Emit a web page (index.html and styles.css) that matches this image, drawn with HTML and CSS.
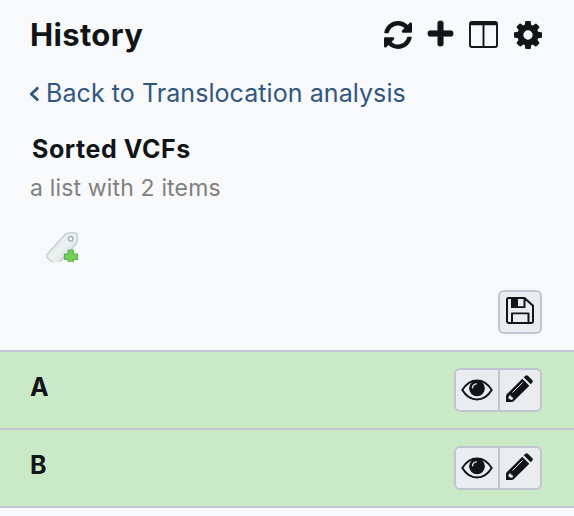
FILE: index.html
```html
<!DOCTYPE html>
<html lang="en">
<head>
<meta charset="utf-8">
<title>History</title>
<link rel="stylesheet" href="styles.css">
</head>
<body>
<svg class="defs" aria-hidden="true">
  <symbol id="eye" viewBox="0 0 32 22">
    <path d="M1.300 11C5 5 10 1.500 16 1.500S27 5 30.700 11C27 17 22 20.500 16 20.500S5 17 1.300 11Z" fill="none" stroke="currentColor" stroke-width="2"/>
    <circle cx="16" cy="9.300" r="7.900" fill="currentColor"/>
    <path d="M11.500 8.800Q11.800 5.300 15.300 4.800" fill="none" stroke="#ebecf0" stroke-width="1.300" stroke-linecap="round"/>
  </symbol>
  <symbol id="pencil" viewBox="0 0 27 27">
    <path fill="currentColor" d="M16.300 3.700 23.300 10.700 7.700 26.300Q7 27 6 27H0V21Q0 20 .7 19.300ZM17.700 2.300 19.400.7Q20.600-.4 21.900.8L26.200 5.100Q27.400 6.400 26.300 7.600L24.700 9.300Z"/>
    <path d="M6.500 17.500 16.700 7.300" stroke="#ebecf0" stroke-width="1" fill="none"/>
    <path d="M3.200 20.400 5.200 20.800 5.600 22.200 7 22.600 7.100 24 5.300 25 2.200 23.300Z" fill="#ebecf0"/>
  </symbol>
</svg>
<main class="panel">
  <header class="top">
    <h1>History</h1>
    <nav class="tools">
      <svg class="refresh" viewBox="8 8 496 496"><path fill="currentColor" d="M370.720 133.280C339.458 104.008 298.888 87.962 255.848 88c-77.458.068-144.328 53.178-162.791 126.850-1.344 5.363-6.122 9.150-11.651 9.150H24.103c-7.498 0-13.194-6.807-11.807-14.176C33.933 94.924 134.813 8 256 8c66.448 0 126.791 26.136 171.315 68.685L463.030 40.970C478.149 25.851 504 36.559 504 57.941V192c0 13.255-10.745 24-24 24H345.941c-21.382 0-32.090-25.851-16.971-40.971l41.750-41.749zM32 296h134.059c21.382 0 32.090 25.851 16.971 40.971l-41.750 41.750c31.262 29.273 71.835 45.319 114.876 45.280 77.418-.070 144.315-53.144 162.787-126.849 1.344-5.363 6.122-9.150 11.651-9.150h57.304c7.498 0 13.194 6.807 11.807 14.176C478.067 417.076 377.187 504 256 504c-66.448 0-126.791-26.136-171.315-68.685L48.970 471.030C33.851 486.149 8 475.441 8 454.059V320c0-13.255 10.745-24 24-24z"/></svg>
      <svg class="plus" viewBox="0 32 448 448"><path fill="currentColor" stroke="currentColor" stroke-width="12" d="M416 208H272V64c0-17.670-14.330-32-32-32h-32c-17.670 0-32 14.330-32 32v144H32c-17.670 0-32 14.330-32 32v32c0 17.670 14.330 32 32 32h144v144c0 17.670 14.330 32 32 32h32c17.670 0 32-14.330 32-32V304h144c17.670 0 32-14.330 32-32v-32c0-17.670-14.330-32-32-32z"/></svg>
      <svg class="columns" viewBox="0 0 30 28"><path fill="currentColor" fill-rule="evenodd" d="M3 0H27Q30 0 30 3V25Q30 28 27 28H3Q0 28 0 25V3Q0 0 3 0ZM2 4.500V25Q2 26 3 26H14V4.500ZM16 4.500V26H27Q28 26 28 25V4.500Z"/></svg>
      <svg class="gear" viewBox="0 -128 1536 1536"><path fill="currentColor" d="M1024 640q0-106-75-181t-181-75-181 75-75 181 75 181 181 75 181-75 75-181zm512-109v222q0 12-8 23t-20 13l-185 28q-19 54-39 91 35 50 107 138 10 12 10 25t-9 23q-27 37-99 108t-94 71q-12 0-26-9l-138-108q-44 23-91 38-16 136-29 186-7 28-36 28H657q-14 0-24.500-8.500T621 1378l-28-184q-49-16-90-37l-141 107q-10 9-25 9-14 0-25-11-126-114-165-168-7-10-7-23 0-12 8-23 15-21 51-66.500t54-70.500q-27-50-41-99L29 783q-13-2-21-12.500T0 747V525q0-12 8-23t19-13l186-28q14-46 39-92-40-57-107-138-10-12-10-24 0-10 9-23 26-36 98.500-107.500T337 5q13 0 26 10l138 107q44-23 91-38 16-136 29-186 7-28 36-28h222q14 0 24.500 8.500T915-98l28 184q49 16 90 37l142-107q9-9 24-9 13 0 25 10 129 119 165 170 7 8 7 22 0 12-8 23-15 21-51 66.500T1283 369q26 50 41 98l183 28q13 2 21 12.500t8 23.500z"/></svg>
    </nav>
  </header>
  <a class="back"><svg viewBox="0 0 11 16"><path d="M8.500 2.500 2 8.500 8.500 14.500" fill="none" stroke="currentColor" stroke-width="3" stroke-linecap="round" stroke-linejoin="round"/></svg><span>Back to Translocation analysis</span></a>
  <h2>Sorted VCFs</h2>
  <p class="summary">a list with 2 items</p>
  <svg class="tag" viewBox="0 0 32 30">
    <defs><linearGradient id="paper" x1="0" y1="0" x2="1" y2="1"><stop offset="0" stop-color="#d3dddc"/><stop offset=".5" stop-color="#edf2f2"/><stop offset="1" stop-color="#c3d0cf"/></linearGradient></defs>
    <path d="M0 23.500 19 2.500Q20.500 .8 23 .8H29Q31.200 .8 31.200 3V9Q31.200 11 29.500 12.800L13 31H8L0 25Z" fill="url(#paper)" stroke="#c2cdcc" stroke-width="1.200"/>
    <circle cx="24.700" cy="6.800" r="2.300" fill="#f8f9fb" stroke="#a5b2b1" stroke-width="1.400"/>
    <path d="M22.200 18.200H27.300V22.200H31.500V27.300H27.300V31H22.200V27.300H18.500V22.200H22.200Z" fill="#72cf58" stroke="#58b348" stroke-width="1.200" stroke-linejoin="round"/>
  </svg>
  <div class="actions">
    <div class="buttons"><button aria-label="Save"><svg class="save" viewBox="0 0 28 28" preserveAspectRatio="none"><path d="M2.500 1H18.500L27 9V25.500Q27 27 25.500 27H2.500Q1 27 1 25.500V2.500Q1 1 2.500 1ZM6 1V10.500H18.500V1M6 27V17H22.500V27" fill="none" stroke="currentColor" stroke-width="2" stroke-linejoin="round"/><path d="M6 1H12V10H6Z" fill="currentColor"/></svg></button></div>
  </div>
  <section class="items">
    <div class="item"><strong>A</strong><div class="buttons"><button aria-label="View"><svg class="eye"><use href="#eye"/></svg></button><button aria-label="Edit"><svg class="pencil"><use href="#pencil"/></svg></button></div></div>
    <div class="item"><strong>B</strong><div class="buttons"><button aria-label="View"><svg class="eye"><use href="#eye"/></svg></button><button aria-label="Edit"><svg class="pencil"><use href="#pencil"/></svg></button></div></div>
  </section>
</main>
</body>
</html>
```
FILE: styles.css
```css
* { box-sizing: border-box; }
body { margin: 0; background: #f8f9fb; color: #111518; font-family: Inter, "Liberation Sans", sans-serif; }
svg { display: block; flex: none; overflow: visible; }
.defs { display: none; }
.panel { display: flex; flex-direction: column; height: 516px; }
.top { display: flex; justify-content: space-between; height: 70px; padding: 15px 32px 0 30px; }
h1, h2, p { margin: 0; white-space: nowrap; }
h1 { font-size: 31px; line-height: 40px; font-weight: 700; letter-spacing: .35px; }
.tools { display: flex; align-items: flex-start; padding-top: 6px; }
.refresh { width: 28px; height: 28px; margin-right: 16px; }
.plus { width: 25px; height: 25px; margin-right: 16px; }
.columns { width: 29px; height: 27px; margin-right: 16px; }
.gear { width: 28px; height: 28px; }
.back { display: flex; align-items: center; gap: 6px; height: 46px; padding-left: 29px; color: #315780; font-size: 25px; line-height: 46px; letter-spacing: .07px; white-space: nowrap; }
.back svg { width: 11px; height: 15px; }
h2 { height: 50px; padding: 15px 0 0 32px; font-size: 25px; line-height: 36px; font-weight: 700; letter-spacing: .55px; }
.summary { height: 66px; padding: 5px 0 0 30px; color: #808080; font-size: 23px; line-height: 34px; letter-spacing: .16px; }
.tag { width: 32px; height: 30px; margin-left: 46px; overflow: hidden; }
.actions { display: flex; justify-content: flex-end; height: 88px; padding: 28px 32px 0; }
.buttons { display: flex; height: 44px; border: 2px solid #bfc6d1; border-radius: 6px; background: #ebecf0; overflow: hidden; }
button { display: flex; align-items: center; justify-content: center; width: 40px; padding: 0; border: 0; background: transparent; color: #111518; }
.item button:first-child { width: 44px; border-right: 2px solid #bfc6d1; }
.save { width: 28px; height: 27px; margin-bottom: 3px; }
.eye { width: 32px; height: 22px; margin-bottom: 1px; }
.pencil { width: 27px; height: 27px; margin: 0 1px 3px 0; }
.items { border-top: 2px solid #bfc6d1; }
.item { display: flex; justify-content: space-between; height: 78px; padding: 16px 32px 0 30px; border-bottom: 2px solid #bfc6d1; background: #cae9c7; }
.item strong { font-size: 25px; line-height: 38px; font-weight: 700; }
```
